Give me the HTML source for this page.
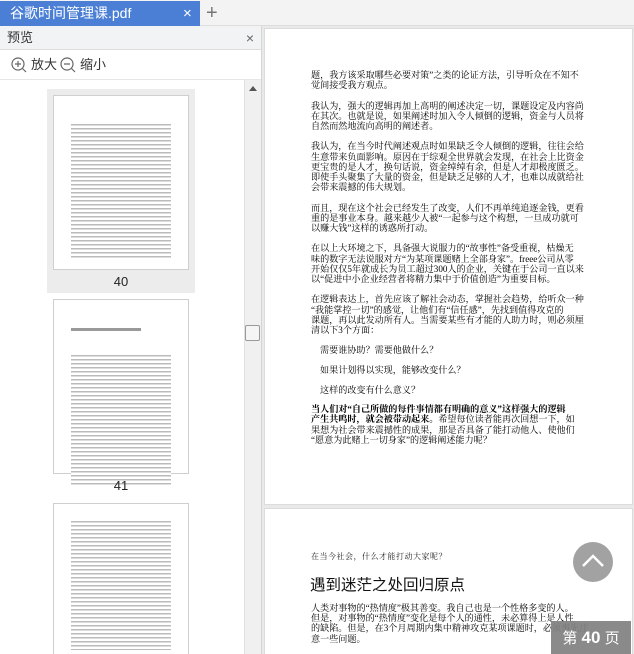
<!DOCTYPE html>
<html style="width:634px;height:654px;overflow:hidden"><head><meta charset="utf-8"><style>
*{margin:0;padding:0;box-sizing:border-box}
body{width:634px;height:654px;overflow:hidden;background:#e9e9e9;font-family:"Liberation Sans","Noto Sans CJK SC",sans-serif;position:relative}
.abs{position:absolute}
.tabbar{left:0;top:0;width:634px;height:26px;background:#f3f3f3;border-bottom:1px solid #ddd}
.tab{left:0;top:1px;width:200px;height:25px;background:#4a7fd5;color:#fff;font-size:14px;line-height:25px;padding-left:10px}
.left{left:0;top:26px;width:262px;height:628px;background:#fff;border-right:1px solid #d5d5d5;overflow:hidden}
.hdr{left:0;top:0;width:262px;height:24px;background:#f2f3f5;border-bottom:1px solid #ddd;font-size:13px;line-height:24px;padding-left:7px;color:#333}
.tool{left:0;top:24px;width:262px;height:30px;border-bottom:1px solid #e6e6e6;font-size:13px;color:#333;line-height:30px}
.sb{left:244px;top:54px;width:17px;height:574px;background:#f0f0f0;border-left:1px solid #e0e0e0}
.thumb{background:#fff;border:1px solid #cfcfcf}
.page{background:#fff;border:1px solid #dcdcdc}
.txt{font-family:"Liberation Serif","Noto Serif CJK SC",serif;font-size:9.1px;line-height:10.2px;color:#000;position:absolute;left:311px;white-space:nowrap}
.txt p{margin-bottom:10.2px}
.q{padding-left:9px;margin-bottom:9.4px!important}
</style></head><body>
<div class="abs tabbar"></div>
<div class="abs tab">谷歌时间管理课.pdf<span style="position:absolute;left:183px;font-size:15px">×</span></div>
<div class="abs" style="left:206px;top:0;font-size:20px;color:#777;line-height:26px">+</div>

<div class="abs left">
 <div class="abs hdr">预览<span style="position:absolute;right:8px;color:#666;font-size:14px">×</span></div>
 <div class="abs tool">
  <svg class="abs" style="left:11px;top:7px" width="16" height="16"><circle cx="7" cy="7" r="6" fill="none" stroke="#666" stroke-width="1.2"/><path d="M4 7h6M7 4v6M11.5 11.5l3.5 3.5" stroke="#666" stroke-width="1.2"/></svg>
  <span class="abs" style="left:31px">放大</span>
  <svg class="abs" style="left:60px;top:7px" width="16" height="16"><circle cx="7" cy="7" r="6" fill="none" stroke="#666" stroke-width="1.2"/><path d="M4 7h6M11.5 11.5l3.5 3.5" stroke="#666" stroke-width="1.2"/></svg>
  <span class="abs" style="left:80px">缩小</span>
 </div>
 <div class="abs sb">
  <div class="abs" style="left:4px;top:6px;width:0;height:0;border-left:4px solid transparent;border-right:4px solid transparent;border-bottom:5px solid #555"></div>
  <div class="abs" style="left:0;top:245px;width:15px;height:16px;background:#f5f5f5;border:1px solid #999;border-radius:2px"></div>
 </div>
 <div class="abs" style="left:47px;top:63px;width:148px;height:204px;background:#ececec"></div>
 <div class="abs thumb" style="left:53px;top:69px;width:136px;height:175px"></div>
 <div class="abs" style="left:71px;top:97px;width:100px;height:135px;background:repeating-linear-gradient(#fff 0 1px,#bbb 1px 2.5px,#fff 2.5px 4px)"></div>
 <div class="abs" style="left:0;top:248px;width:242px;text-align:center;font-size:13px;color:#222">40</div>
 <div class="abs thumb" style="left:53px;top:273px;width:136px;height:175px"></div>
 <div class="abs" style="left:71px;top:302px;width:70px;height:3px;background:#999"></div>
 <div class="abs" style="left:71px;top:328px;width:100px;height:132px;background:repeating-linear-gradient(#fff 0 1px,#bbb 1px 2.5px,#fff 2.5px 4px)"></div>
 <div class="abs" style="left:0;top:452px;width:242px;text-align:center;font-size:13px;color:#222">41</div>
 <div class="abs thumb" style="left:53px;top:477px;width:136px;height:160px"></div>
 <div class="abs" style="left:71px;top:494px;width:100px;height:130px;background:repeating-linear-gradient(#fff 0 1px,#bbb 1px 2.5px,#fff 2.5px 4px)"></div>
</div>

<div class="abs page" style="left:264px;top:28px;width:369px;height:477px"></div>
<div class="abs page" style="left:264px;top:508px;width:369px;height:160px"></div>

<div class="txt" style="top:70px">
<p>题，我方该采取哪些必要对策”之类的论证方法，引导听众在不知不<br>觉间接受我方观点。</p>
<p>我认为，强大的逻辑再加上高明的阐述决定一切，课题设定及内容尚<br>在其次。也就是说，如果阐述时加入令人倾倒的逻辑，资金与人员将<br>自然而然地流向高明的阐述者。</p>
<p>我认为，在当今时代阐述观点时如果缺乏令人倾倒的逻辑，往往会给<br>生意带来负面影响。原因在于综观全世界就会发现，在社会上比资金<br>更宝贵的是人才，换句话说，资金绰绰有余，但是人才却极度匮乏。<br>即使手头聚集了大量的资金，但是缺乏足够的人才，也难以成就给社<br>会带来震撼的伟大规划。</p>
<p>而且，现在这个社会已经发生了改变，人们不再单纯追逐金钱，更看<br>重的是事业本身。越来越少人被“一起参与这个构想，一旦成功就可<br>以赚大钱”这样的诱惑所打动。</p>
<p>在以上大环境之下，具备强大说服力的“故事性”备受重视，枯燥无<br>味的数字无法说服对方“为某项课题赌上全部身家”。freee公司从零<br>开始仅仅5年就成长为员工超过300人的企业，关键在于公司一直以来<br>以“促进中小企业经营者将精力集中于价值创造”为重要目标。</p>
<p>在逻辑表达上，首先应该了解社会动态，掌握社会趋势，给听众一种<br>“我能掌控一切”的感觉，让他们有“信任感”，先找到值得攻克的<br>课题，再以此发动所有人。当需要某些有才能的人助力时，则必须厘<br>清以下3个方面：</p>
<p class="q">需要谁协助？需要他做什么？</p>
<p class="q">如果计划得以实现，能够改变什么？</p>
<p class="q">这样的改变有什么意义？</p>
<p><b>当人们对“自己所做的每件事情都有明确的意义”这样强大的逻辑<br>产生共鸣时，就会被带动起来。</b>希望每位读者能再次回想一下，如<br>果想为社会带来震撼性的成果，那是否具备了能打动他人、使他们<br>“愿意为此赌上一切身家”的逻辑阐述能力呢？</p>
</div>

<div class="abs" style="left:311px;top:551px;font-size:8px;letter-spacing:0.5px;font-family:'Liberation Serif','Noto Serif CJK SC',serif;color:#222">在当今社会，什么才能打动大家呢？</div>
<div class="abs" style="left:310px;top:573px;font-size:15.5px;color:#111">遇到迷茫之处回归原点</div>
<div class="txt" style="top:603px">人类对事物的“热情度”极其善变。我自己也是一个性格多变的人。<br>但是，对事物的“热情度”变化是每个人的通性，未必算得上是人性<br>的缺陷。但是，在3个月周期内集中精神攻克某项课题时，必须事先注<br>意一些问题。</div>

<div class="abs" style="left:573px;top:542px;width:40px;height:40px;border-radius:50%;background:#a2a2a2"></div>
<svg class="abs" style="left:573px;top:542px" width="40" height="40"><path d="M10 24l10-10 10 10" fill="none" stroke="#fff" stroke-width="2.5"/></svg>
<div class="abs" style="left:551px;top:621px;width:80px;height:33px;background:rgba(128,128,128,0.92);color:#fff;font-size:15px;line-height:33px;text-align:center">第 <b style="font-size:17px">40</b> 页</div>
</body></html>
